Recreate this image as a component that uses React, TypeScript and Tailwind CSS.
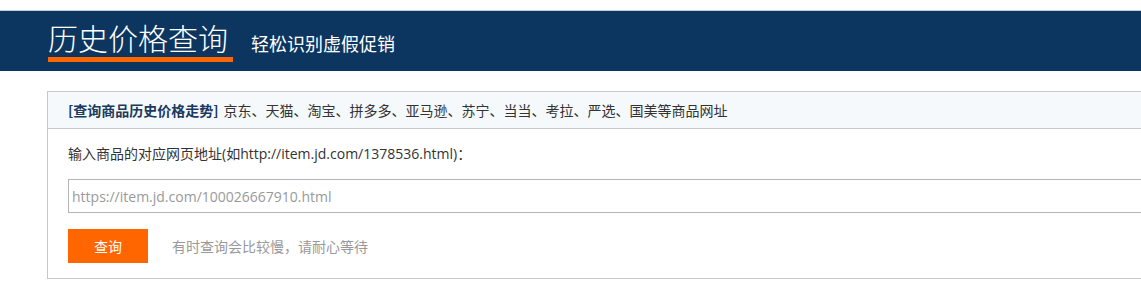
export default function App() {
	return (
		<div className="w-[1141px] h-[303px] overflow-hidden bg-white font-['Open_Sans','Noto_Sans_CJK_SC',sans-serif]">
			{/* top bar */}
			<div className="mt-[10px] h-[61px] bg-[#0c3560] border-t border-[#c9ced6] flex items-start pl-[48px]">
				<div className="flex flex-col pt-[10px]">
					<div className="text-[30px] leading-[32px] font-light text-white font-['Noto_Sans_CJK_SC',sans-serif]">
						历史价格查询
					</div>
					<div className="mt-[4px] h-[5px] w-[185px] bg-[#ff6600]" />
				</div>
				<div className="ml-[18px] mt-[20px] text-[18px] leading-[24px] text-white font-['Noto_Sans_CJK_SC',sans-serif]">
					轻松识别虚假促销
				</div>
			</div>

			{/* search panel */}
			<div className="mt-[20px] ml-[47px] w-[1120px] border border-[#c8c8c8]">
				<div className="h-[37px] bg-[#f5f9fc] border-b border-[#c8c8c8] flex items-center pl-[20px] text-[14px] text-[#333] font-['Noto_Sans_CJK_SC',sans-serif]">
					<span className="font-bold text-[#1b3a5e]">[查询商品历史价格走势]</span>
					<span className="ml-[5px]">京东、天猫、淘宝、拼多多、亚马逊、苏宁、当当、考拉、严选、国美等商品网址</span>
				</div>
				<div className="pl-[20px] pt-[15px] pb-[15px]">
					<div className="text-[14px] leading-[20px] text-[#333]">
						输入商品的对应网页地址(如http://item.jd.com/1378536.html)：
					</div>
					<div className="mt-[15px] h-[34px] border border-[#b4b4b4] flex items-center pl-[3px] text-[14px] text-[#999]">
						https://item.jd.com/100026667910.html
					</div>
					<div className="mt-[16px] flex items-center">
						<div className="w-[80px] h-[34px] bg-[#ff6600] flex items-center justify-center text-white text-[14px] font-['Noto_Sans_CJK_SC',sans-serif]">
							查询
						</div>
						<div className="ml-[24px] text-[14px] text-[#999] font-['Noto_Sans_CJK_SC',sans-serif]">
							有时查询会比较慢，请耐心等待
						</div>
					</div>
				</div>
			</div>
		</div>
	);
}
